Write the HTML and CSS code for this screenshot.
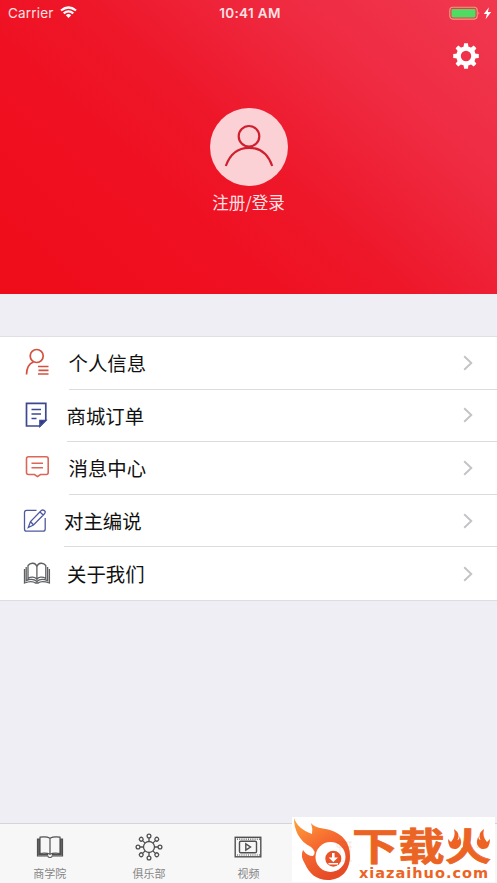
FILE: index.html
```html
<!DOCTYPE html>
<html lang="zh-CN">
<head>
<meta charset="utf-8">
<title>个人中心</title>
<link rel="stylesheet" href="styles.css">
</head>
<body>
<div class="app">
  <header class="hero">
    <div class="status">
      <div class="carrier"><span>Carrier</span>
        <svg width="17" height="13" viewBox="0 0 17 13" fill="none" stroke="currentColor" stroke-width="2.2"><path d="M1 4.5Q8.500-1.500 16 4.500M3.700 7.400Q8.500 3.500 13.300 7.400"/><path d="M5.800 9.200Q8.500 7 11.200 9.200L8.500 12Z" fill="currentColor" stroke="none"/></svg>
      </div>
      <div class="time">10:41 AM</div>
      <div class="power">
        <svg width="44" height="16" viewBox="0 0 44 16"><rect x=".8" y="2.300" width="27.400" height="11.800" rx="3" fill="none" stroke="#e7a080" stroke-width="1.100"/><rect x="2.500" y="4" width="24" height="8.400" rx="1.300" fill="#50dc62"/><path d="M29.500 6.300q1.700 1.900 0 3.800z" fill="#eea09a"/><path d="M40 2.200L34.700 9h3.200l-1.300 5.300L42.200 7h-3.300z" fill="#fff"/></svg>
      </div>
    </div>
    <div class="settings">
      <svg width="26" height="26" viewBox="-13 -13 26 26" fill="#fff"><circle r="7.500" fill="none" stroke="#fff" stroke-width="4.600"/><path id="tooth" d="M-2.600-8L-1.900-12.800H1.900L2.600-8zM-2.600 8L-1.900 12.800H1.900L2.600 8z"/><use href="#tooth" transform="rotate(45)"/><use href="#tooth" transform="rotate(90)"/><use href="#tooth" transform="rotate(135)"/></svg>
    </div>
    <div class="avatar">
      <svg width="78" height="78" viewBox="0 0 78 78" fill="none" stroke="#cf202f" stroke-width="2.200"><circle cx="39" cy="28.300" r="10.300"/><path d="M15.800 58C20 46 28 39.800 39 39.800S58 46 62.200 58"/></svg>
    </div>
    <div class="login">注册/登录</div>
  </header>

  <main class="menu">
    <div class="row r1">
      <svg class="ico" width="28" height="28" viewBox="0 0 28 28" fill="none" stroke="#d6503f" stroke-width="1.700"><circle cx="13.700" cy="8" r="6.500"/><path d="M3.500 26.500C3.700 18.500 6.700 15.400 10.500 14M15 18.500H25.500M15.500 22.300H25.500M15 26H25.500"/></svg>
      <div class="cell"><span>个人信息</span><svg class="chev" width="10" height="16" viewBox="0 0 10 16"><path d="M1.200 1.200L8.300 8l-7.100 6.800"/></svg></div>
    </div>
    <div class="row r2">
      <svg class="ico" width="28" height="28" viewBox="0 0 28 28" fill="none" stroke="#3c4991" stroke-width="1.700"><path d="M3.500 3.300H22.800V20L17 26H3.500zM8.500 9.500H18M8.500 14H18M8.500 18.500H13.500"/><path d="M22.500 20.500H17V26z" fill="#29367e"/></svg>
      <div class="cell"><span>商城订单</span><svg class="chev" width="10" height="16" viewBox="0 0 10 16"><path d="M1.200 1.200L8.300 8l-7.100 6.800"/></svg></div>
    </div>
    <div class="row r3">
      <svg class="ico" width="28" height="28" viewBox="0 0 28 28" fill="none" stroke="#dc6657" stroke-width="1.600"><path d="M5.500 3.800H23.200Q25.200 3.800 25.200 5.800V19.500Q25.200 21.500 23.200 21.500H17.500L14.500 23.600L11.500 21.500H5.500Q3.500 21.500 3.500 19.500V5.800Q3.500 3.800 5.500 3.800M8.500 10.200H20M8.500 14.700H20"/></svg>
      <div class="cell"><span>消息中心</span><svg class="chev" width="10" height="16" viewBox="0 0 10 16"><path d="M1.200 1.200L8.300 8l-7.100 6.800"/></svg></div>
    </div>
    <div class="row r4">
      <svg class="ico" width="28" height="28" viewBox="0 0 28 28" fill="none" stroke="#4d5aa0" stroke-width="1.300"><path d="M13.500 3.300H3.500Q1.500 3.300 1.500 5.500V22Q1.500 24.200 3.500 24.200H20Q22.200 24.200 22.200 22V11M5.300 20.500L7.500 14.500L18.500 3.300Q20.500 2.300 22.200 4.500Q22.300 6 21.500 6.700L10.500 18zM7.500 14.500L10.500 18M17 5L20.200 8"/></svg>
      <div class="cell"><span>对主编说</span><svg class="chev" width="10" height="16" viewBox="0 0 10 16"><path d="M1.200 1.200L8.300 8l-7.100 6.800"/></svg></div>
    </div>
    <div class="row r5">
      <svg class="ico" width="28" height="28" viewBox="0 0 28 28" fill="none" stroke="#5d5f62" stroke-width="1.300"><path d="M13.900 6.500C12.500 2.500 7.500 2.200 5 5.500V18.500C8 16.500 12 16.700 13.900 19.500C15.500 16.700 19.500 16.500 22.800 18.500V5.500C20.300 2.200 15.300 2.500 13.900 6.500V19.500M3.200 7V20.700C7.500 18.700 11 19 13.900 21.500C16.500 19 20 18.700 24.600 20.700V7M1.500 9V23C6.500 21 10 21 12.500 23H15.200C17.500 21 21 21 26.400 23V9"/></svg>
      <div class="cell"><span>关于我们</span><svg class="chev" width="10" height="16" viewBox="0 0 10 16"><path d="M1.200 1.200L8.300 8l-7.100 6.800"/></svg></div>
    </div>
  </main>

  <nav class="tabs">
    <div class="tab"><svg width="28" height="28" viewBox="0 0 28 28" fill="none" stroke="#505050" stroke-width="1.200"><path d="M14 5.200C11.500 3.800 7 3.800 4 4.200V20.500C8 20 12 20.300 14 21.200C16 20.300 20 20 24 20.500V4.200C21 3.800 16.500 3.800 14 5.200V21M4 6H1.500V23H11.800Q12 24.500 14 24.500T16.200 23H26.500V6H24M2.800 6V21.700H12M25.200 6V21.700H16"/></svg><span>商学院</span></div>
    <div class="tab"><svg width="28" height="28" viewBox="-14 -14 28 28" fill="none" stroke="#505050" stroke-width="1.300"><circle r="5.500"/><g id="pair"><path d="M0-5.500V-9M0 5.500V9"/><circle cy="-11" r="1.900"/><circle cy="11" r="1.900"/></g><use href="#pair" transform="rotate(45)"/><use href="#pair" transform="rotate(90)"/><use href="#pair" transform="rotate(135)"/></svg><span>俱乐部</span></div>
    <div class="tab"><svg width="28" height="28" viewBox="0 0 28 28" fill="none" stroke="#505050" stroke-width="1.400"><rect x="1.200" y="4.300" width="25.600" height="19.500"/><rect x="5.500" y="8.300" width="17" height="11.500" rx="1.300"/><path d="M11.800 10.800V17.200L16.500 14z"/><path d="M3 6.100H26M3 22H26" stroke-dasharray="1 1.200" stroke-width="1.200"/></svg><span>视频</span></div>
    <div class="tab"></div>
    <div class="tab"></div>
  </nav>

  <aside class="badge">
    <svg class="flame" width="60" height="65" viewBox="0 0 60 65">
      <defs><linearGradient id="fire" x1="0" y1="0" x2=".5" y2="1"><stop offset="0" stop-color="#ffa33a"/><stop offset=".5" stop-color="#f66b30"/><stop offset="1" stop-color="#e64b27"/></linearGradient></defs>
      <path d="M2 1C5 9 10 13 20 17Q21 12 19 6C23 11 30 11 38 13C51 17 58 26 58 39C58 54 49 63 36 63C24 63 17 56 13 47Q8 39 11 33Q15 39 21 39Q25 35 19 30C7 24 2 13 2 1Z" fill="url(#fire)"/>
      <circle cx="38.500" cy="40" r="15" fill="#fff"/><circle cx="41.300" cy="41.700" r="8" fill="#e95329"/><path d="M40 36H42.600V40.500H46L41.300 45L36.600 40.500H40zM36.500 46H46V47.500H36.500z" fill="#fff"/>
      <g fill="none" stroke="#b34a26" stroke-opacity=".13"><path d="M45 25H70V30H45zM48 30V44H68V30M58 25V44"/></g>
    </svg>
    <div class="brand"><span class="name">下载火</span><span class="site">xiazaihuo.com</span></div>
    <svg class="sparks" width="44" height="22" viewBox="0 0 44 22">
      <path d="M0 2H14L16 18L7 22H0zM44 2H31L28 17L35 21H44z" fill="#fff"/>
      <path d="M7 0Q14 5 10.500 11Q13 10 12.500 7Q17 17 9 20Q1 21 1 10L4 13Q9 8 7 0M37 0Q30 5 33.500 11Q31 10 31.500 7Q27 17 35 20Q43 21 43 10L40 13Q35 8 37 0" fill="#ee6324"/>
    </svg>
  </aside>
</div>
</body>
</html>
```
FILE: styles.css
```css
* { box-sizing: border-box; }
body { margin: 0; }
.app {
  position: relative;
  display: flex;
  flex-direction: column;
  width: 497px;
  height: 883px;
  overflow: hidden;
  background: #efeef4;
  font-family: "Noto Sans CJK SC", sans-serif;
}
svg { display: block; flex: none; }
.hero {
  display: flex;
  flex-direction: column;
  align-items: center;
  height: 294px;
  color: #ffe1e3;
  background: linear-gradient(42deg, #ef0c1a 0%, #ef1021 32%, #ee172a 50%, #ef2b42 74%, #f0384f 100%);
}
.status {
  display: grid;
  grid-template-columns: 1fr auto 1fr;
  align-items: center;
  width: 100%;
  height: 25px;
  padding: 0 4px 0 8px;
  font-family: Inter, sans-serif;
}
.carrier { display: flex; align-items: center; gap: 6px; font-size: 13.500px; letter-spacing: .2px; }
.carrier svg { color: #fff; }
.time { font-size: 13.500px; font-weight: 600; letter-spacing: .35px; margin-left: -1px; }
.power { justify-self: end; }
.settings { align-self: flex-end; margin: 18px 18px 0 0; }
.avatar { width: 78px; height: 78px; margin-top: 39px; border-radius: 50%; background: #fbd1d5; }
.login { margin-top: 4px; font-size: 16.500px; line-height: 24px; }
.menu {
  margin-top: 42px;
  height: 265px;
  border-top: 1px solid #e0dfe4;
  border-bottom: 1px solid #dedee2;
  background: #fff;
}
.row { display: flex; align-items: center; height: 52.600px; padding-left: 23px; }
.ico { margin-bottom: 3px; }
.r2 .ico { margin-bottom: 4px; }
.r4 .ico { margin-bottom: 1px; }
.r5 .ico { margin-bottom: 0; }
.cell {
  display: flex;
  flex: 1;
  align-items: center;
  justify-content: space-between;
  height: 100%;
  margin-left: 17.500px;
  padding-right: 24px;
  border-bottom: 1px solid #dcdce0;
  font-size: 19.400px;
  color: #111;
}
.r2 .cell { margin-left: 15.500px; }
.r4 .cell { margin-left: 13px; }
.r5 .cell { margin-left: 16px; border-bottom: 0; }
.chev { fill: none; stroke: #c3c3c7; stroke-width: 1.900; }
.tabs {
  display: grid;
  grid-template-columns: repeat(5, 1fr);
  height: 60px;
  margin-top: auto;
  border-top: 1px solid #d5d4d9;
  background: #f7f7f8;
}
.tab { display: flex; flex-direction: column; align-items: center; padding-top: 9px; font-size: 11px; line-height: 16px; color: #858585; }
.tab span { margin-top: 4px; }
.badge {
  position: absolute;
  left: 292px;
  top: 817px;
  display: flex;
  width: 203px;
  height: 65px;
  background: rgba(255, 255, 255, .97);
}
.brand { display: flex; flex-direction: column; color: #ec6424; }
.name {
  height: 49px;
  font-size: 38px;
  font-weight: 700;
  line-height: 54px;
  white-space: nowrap;
  transform: scaleX(1.22);
  transform-origin: left;
  -webkit-text-stroke: .7px #ec6424;
}
.site { margin-left: 7px; font: 700 14.500px/14px "DejaVu Sans", sans-serif; letter-spacing: 1px; }
.sparks { position: absolute; left: 155px; top: 12px; }
```
